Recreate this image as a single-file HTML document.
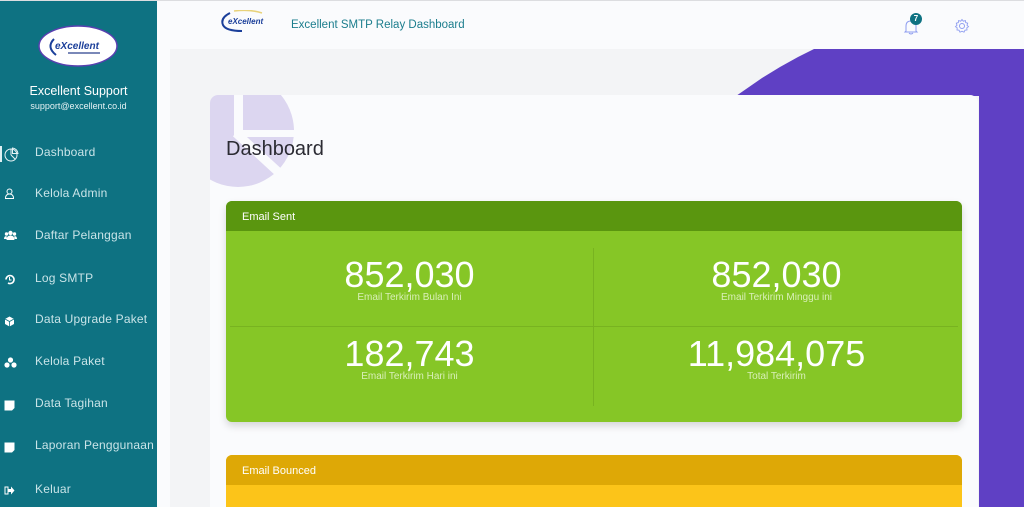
<!DOCTYPE html>
<html><head><meta charset="utf-8"><style>
*{margin:0;padding:0;box-sizing:border-box}
html,body{width:1024px;height:507px;overflow:hidden}
body{font-family:"Liberation Sans",sans-serif;background:#f3f4f6;position:relative}
.top{position:absolute;left:0;top:0;width:1024px;height:1px;background:#dcdde0;z-index:5}
.side{position:absolute;left:0;top:0;width:157px;height:507px;background:#0e7282;color:#fff}
.strip{position:absolute;left:157px;top:0;width:13px;height:507px;background:#fafbfd}
.hdr{position:absolute;left:170px;top:0;width:854px;height:49px;background:#fafbfd}
.card{position:absolute;left:210px;top:95px;width:768px;height:412px;background:#fafbfd;border-radius:8px 8px 0 0;overflow:hidden}
.nav{position:absolute;left:35px;font-size:12px;color:#c9e4e8;letter-spacing:.2px}
.ic{position:absolute;left:4px;width:11px;height:11px}
.box{position:absolute;left:16px;width:736px;border-radius:6px;overflow:hidden;box-shadow:0 4px 8px rgba(0,0,0,.15)}
.bh{height:30px;color:#fff;font-size:11px;padding:10px 0 0 16px}
.cell{position:absolute;width:367px;text-align:center;color:#fff}
.num{font-size:36px;line-height:36px}
.lbl{font-size:10px;color:#d9efb8;margin-top:-1px}
</style></head><body>
<div class="top"></div>
<svg width="1024" height="507" style="position:absolute;left:0;top:0"><path d="M816 48 L798 57 L780 67 L762 78 L736 96 L979 96 L979 507 L1024 507 L1024 48 Z" fill="#5f40c4"/></svg>
<div class="hdr">
 <svg style="position:absolute;left:50px;top:10px" width="60" height="25" viewBox="0 0 60 25"><path d="M10 3 Q0 8 3 15 Q6 21 22 21" stroke="#1b3f9a" stroke-width="2" fill="none"/><path d="M14 1 Q30 -1 42 3" stroke="#e8d27a" stroke-width="1.5" fill="none"/><text x="8" y="14" font-size="8" font-weight="bold" font-style="italic" fill="#1b3f9a" font-family="Liberation Sans">eXcellent</text></svg>
 <div style="position:absolute;left:121px;top:19px;font-size:11.5px;color:#1b7d8d">Excellent SMTP Relay Dashboard</div>
 <svg style="position:absolute;left:733px;top:18px" width="16" height="18" viewBox="0 0 16 18"><path d="M3 13 V8 Q3 3 8 3 Q13 3 13 8 V13 L14 14 H2 Z M6 15 Q8 17 10 15" stroke="#8f9ef0" stroke-width="1" fill="none"/></svg>
 <div style="position:absolute;left:740px;top:13px;width:12px;height:12px;border-radius:6px;background:#0e7282;color:#fff;font-size:8px;text-align:center;line-height:12px;font-weight:bold">7</div>
 <svg style="position:absolute;left:784px;top:18px" width="16" height="16" viewBox="0 0 16 16"><circle cx="8" cy="8" r="2.5" stroke="#8f9ef0" fill="none"/><path d="M8 1.5 L9.3 3.2 L11.4 2.6 L11.7 4.6 L13.7 5.2 L13 7.2 L14.5 8.7 L12.8 9.8 L13 12 L11 12.2 L10 14.2 L8 13.2 L6 14.2 L5 12.2 L3 12 L3.2 9.8 L1.5 8.7 L3 7.2 L2.3 5.2 L4.3 4.6 L4.6 2.6 L6.7 3.2 Z" stroke="#8f9ef0" fill="none" stroke-width=".9"/></svg>
</div>
<div class="strip"></div>
<div class="side">
 <svg style="position:absolute;left:38px;top:25px" width="80" height="42" viewBox="0 0 80 42"><ellipse cx="40" cy="21" rx="39" ry="20" fill="#fff" stroke="#5840b0" stroke-width="1.5"/><path d="M16 14 Q8 22 18 30" stroke="#1b3f9a" stroke-width="2" fill="none"/><text x="17" y="24" font-size="10" font-weight="bold" font-style="italic" fill="#1b3f9a" font-family="Liberation Sans">eXcellent</text><rect x="30" y="27" width="32" height="2" fill="#7a88b8"/></svg>
 <div style="position:absolute;top:84px;width:157px;text-align:center;font-size:12.5px">Excellent Support</div>
 <div style="position:absolute;top:101px;width:157px;text-align:center;font-size:9px;color:#e6f2f4">support@excellent.co.id</div>
 <div style="position:absolute;left:0;top:146px;width:2px;height:16px;background:#dfeff2"></div>
 <svg class="ic" style="top:147px;width:15px;height:15px" viewBox="0 0 15 15"><circle cx="7" cy="8" r="6" stroke="#e8f3f5" fill="none"/><path d="M7 8 V2 M7 8 L11 12 M8.5 1 A6 6 0 0 1 14 6.5 H8.5 Z" stroke="#e8f3f5" fill="none"/></svg>
 <div class="nav" style="top:145px">Dashboard</div>
 <svg class="ic" style="top:188px" viewBox="0 0 11 11"><circle cx="5.5" cy="3.5" r="2.5" stroke="#fff" fill="none"/><path d="M1.5 10.5 Q1.5 6 5.5 6 Q9.5 6 9.5 10.5 Z" stroke="#fff" fill="none"/></svg>
 <div class="nav" style="top:186px">Kelola Admin</div>
 <svg class="ic" style="top:230px;width:13px" viewBox="0 0 13 11"><circle cx="6.5" cy="3" r="2.2" fill="#fff"/><circle cx="2.5" cy="4" r="1.7" fill="#fff"/><circle cx="10.5" cy="4" r="1.7" fill="#fff"/><path d="M2.5 10 Q2.5 5.5 6.5 5.5 Q10.5 5.5 10.5 10 Z M0 9 Q0 6 2.5 6 L3 9 Z M13 9 Q13 6 10.5 6 L10 9Z" fill="#fff"/></svg>
 <div class="nav" style="top:228px">Daftar Pelanggan</div>
 <svg class="ic" style="top:274px" viewBox="0 0 11 11"><path d="M2 5.5 A4 4 0 1 1 4 9" stroke="#fff" stroke-width="1.6" fill="none"/><path d="M5.5 3 V6 H7.5" stroke="#fff" fill="none"/></svg>
 <div class="nav" style="top:271px">Log SMTP</div>
 <svg class="ic" style="top:316px" viewBox="0 0 11 11"><path d="M5.5 0.5 L10 3 V8 L5.5 10.5 L1 8 V3 Z" fill="#fff"/><path d="M1 3 L5.5 5.5 L10 3 M5.5 5.5 V10.5" stroke="#0e7282" fill="none" stroke-width=".8"/></svg>
 <div class="nav" style="top:312px">Data Upgrade Paket</div>
 <svg class="ic" style="top:357px;width:13px" viewBox="0 0 13 11"><circle cx="6.5" cy="3" r="2.6" fill="#fff"/><circle cx="3" cy="8" r="2.6" fill="#fff"/><circle cx="10" cy="8" r="2.6" fill="#fff"/></svg>
 <div class="nav" style="top:354px">Kelola Paket</div>
 <svg class="ic" style="top:400px" viewBox="0 0 11 11"><path d="M0.5 0.5 H10.5 V8 L8 10.5 H0.5 Z" fill="#fff"/></svg>
 <div class="nav" style="top:396px">Data Tagihan</div>
 <svg class="ic" style="top:442px" viewBox="0 0 11 11"><path d="M0.5 0.5 H10.5 V8 L8 10.5 H0.5 Z" fill="#fff"/></svg>
 <div class="nav" style="top:438px">Laporan Penggunaan</div>
 <svg class="ic" style="top:485px" viewBox="0 0 11 11"><path d="M1 2 H4 V9 H1 Z" stroke="#fff" fill="none"/><path d="M4 4 H7 V1.5 L10.5 5.5 L7 9.5 V7 H4 Z" fill="#fff"/></svg>
 <div class="nav" style="top:482px">Keluar</div>
</div>
<div class="card">
 <svg style="position:absolute;left:0;top:0" width="110" height="100" viewBox="0 0 110 100"><circle cx="28" cy="36" r="56" fill="#dcd6f0"/><rect x="24" y="0" width="9" height="40" fill="#fafbfd"/><rect x="24" y="35" width="80" height="7" fill="#fafbfd"/><path d="M26 38 L78 86" stroke="#fafbfd" stroke-width="9"/></svg>
 <div style="position:absolute;left:16px;top:43px;font-size:20px;color:#2b2b33">Dashboard</div>
 <div class="box" style="top:106px;height:221px;background:#86c626">
  <div class="bh" style="background:#5a960f">Email Sent</div>
  <div style="position:absolute;left:367px;top:47px;width:1px;height:158px;background:#78b320"></div>
  <div style="position:absolute;left:4px;top:125px;width:728px;height:1px;background:#78b320"></div>
  <div class="cell" style="left:0;top:56px"><div class="num">852,030</div><div class="lbl">Email Terkirim Bulan Ini</div></div>
  <div class="cell" style="left:367px;top:56px"><div class="num">852,030</div><div class="lbl">Email Terkirim Minggu ini</div></div>
  <div class="cell" style="left:0;top:135px"><div class="num">182,743</div><div class="lbl">Email Terkirim Hari ini</div></div>
  <div class="cell" style="left:367px;top:135px"><div class="num">11,984,075</div><div class="lbl">Total Terkirim</div></div>
 </div>
 <div class="box" style="top:360px;height:52px;background:#fcc419;border-radius:6px 6px 0 0;box-shadow:none">
  <div class="bh" style="background:#dea806">Email Bounced</div>
 </div>
</div>
</body></html>
